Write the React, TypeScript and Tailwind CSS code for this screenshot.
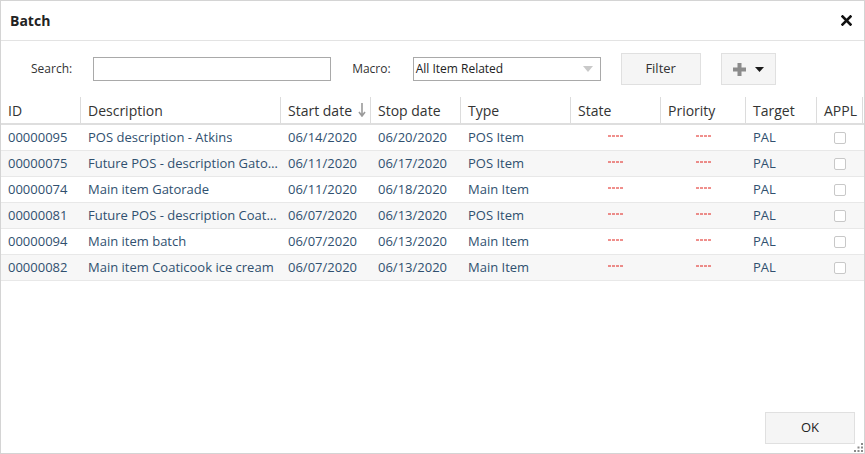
import { } from 'react'

interface Row { id: string; desc: string; start: string; stop: string; type: string; target: string }

const ROWS: Row[] = [
  { id: '00000095', desc: 'POS description - Atkins', start: '06/14/2020', stop: '06/20/2020', type: 'POS Item', target: 'PAL' },
  { id: '00000075', desc: 'Future POS - description Gatorade', start: '06/11/2020', stop: '06/17/2020', type: 'POS Item', target: 'PAL' },
  { id: '00000074', desc: 'Main item Gatorade', start: '06/11/2020', stop: '06/18/2020', type: 'Main Item', target: 'PAL' },
  { id: '00000081', desc: 'Future POS - description Coaticook', start: '06/07/2020', stop: '06/13/2020', type: 'POS Item', target: 'PAL' },
  { id: '00000094', desc: 'Main item batch', start: '06/07/2020', stop: '06/13/2020', type: 'Main Item', target: 'PAL' },
  { id: '00000082', desc: 'Main item Coaticook ice cream', start: '06/07/2020', stop: '06/13/2020', type: 'Main Item', target: 'PAL' },
]

const COLS = [
  { label: 'ID', w: 'w-[80px]' },
  { label: 'Description', w: 'w-[200px]' },
  { label: 'Start date', w: 'w-[90px]', sort: true },
  { label: 'Stop date', w: 'w-[90px]' },
  { label: 'Type', w: 'w-[110px]' },
  { label: 'State', w: 'w-[90px]' },
  { label: 'Priority', w: 'w-[85px]' },
  { label: 'Target', w: 'w-[71px]' },
  { label: 'APPL', w: 'w-[46px]' },
]

// the little red "no value" marker
function Dash() {
  return (
    <svg width="16" height="2" viewBox="0 0 16 2" className="-mt-[4px]">
      <line x1="0" y1="1" x2="16" y2="1" stroke="#e0201a" strokeWidth="1" strokeDasharray="3 1" />
    </svg>
  )
}

export default function App() {
  return (
    <div className="w-[865px] h-[454px] bg-white border border-[#d4d4d4] flex flex-col text-[#333] overflow-hidden" style={{ fontFamily: '"Open Sans", "Noto Sans", sans-serif' }}>
      {/* title */}
      <div className="h-[40px] shrink-0 flex items-center justify-between pl-[9px] pr-[12px] border-b border-[#e3e3e3]">
        <span className="text-[14px] font-bold text-[#222]">Batch</span>
        <svg width="11" height="11" viewBox="0 0 11 11">
          <path d="M1.5 1.5 L9.5 9.5 M9.5 1.5 L1.5 9.5" stroke="#111" strokeWidth="2.6" strokeLinecap="square" />
        </svg>
      </div>

      {/* toolbar */}
      <div className="h-[56px] shrink-0 flex items-center pl-[30px]">
        <span className="text-[12px] mr-[21px]">Search:</span>
        <input className="w-[238px] h-[24px] border border-[#a9a9a9] outline-none px-1 text-[12px]" />
        <span className="text-[12px] ml-[21px] mr-[22px]">Macro:</span>
        <div className="w-[188px] h-[24px] border border-[#a9a9a9] flex items-center justify-between pl-[2px] pr-[7px] text-[12px] text-[#222]">
          <span>All Item Related</span>
          <svg width="10" height="6" viewBox="0 0 10 6"><path d="M0 0 H10 L5 6 Z" fill="#c9c9c9" /></svg>
        </div>
        <button className="ml-[20px] w-[80px] h-[32px] bg-[#f5f5f5] border border-[#e0e0e0] text-[13px] text-[#333]">Filter</button>
        <button className="ml-[20px] w-[55px] h-[32px] bg-[#f5f5f5] border border-[#e0e0e0] flex items-center justify-center gap-[9px]">
          <svg width="13" height="13" viewBox="0 0 13 13"><path d="M6.5 0 V13 M0 6.5 H13" stroke="#8c8c8c" strokeWidth="4" /></svg>
          <svg width="9" height="5" viewBox="0 0 9 5"><path d="M0 0 H9 L4.5 5 Z" fill="#1a1a1a" /></svg>
        </button>
      </div>

      {/* table */}
      <div className="flex flex-col">
        <div className="flex h-[28px] border-b-2 border-[#dedede]">
          {COLS.map(c => (
            <div key={c.label} className={`${c.w} shrink-0 border-r border-[#dcdcdc] flex items-center justify-between pl-[7px] pr-[4px] text-[14px] text-[#333]`}>
              <span>{c.label}</span>
              {c.sort && (
                <svg width="8" height="14" viewBox="0 0 8 14"><path d="M4 0 V12 M1 9 L4 13 L7 9" stroke="#9a9a9a" strokeWidth="1.6" fill="none" /></svg>
              )}
            </div>
          ))}
        </div>
        {ROWS.map((r, i) => (
          <div key={r.id} className={`flex h-[26px] pt-[1px] border-b border-[#e8e8e8] text-[13px] text-[#30506f] ${i % 2 ? 'bg-[#f7f7f7]' : 'bg-white'}`}>
            <div className="w-[80px] shrink-0 pl-[7px] flex items-center">{r.id}</div>
            <div className="w-[200px] shrink-0 pl-[7px] pr-[2px] flex items-center min-w-0 overflow-hidden"><span className="truncate">{r.desc}</span></div>
            <div className="w-[90px] shrink-0 pl-[7px] flex items-center">{r.start}</div>
            <div className="w-[90px] shrink-0 pl-[7px] flex items-center">{r.stop}</div>
            <div className="w-[110px] shrink-0 pl-[7px] flex items-center">{r.type}</div>
            <div className="w-[90px] shrink-0 flex items-center justify-center"><Dash /></div>
            <div className="w-[85px] shrink-0 flex items-center justify-center"><Dash /></div>
            <div className="w-[71px] shrink-0 pl-[7px] flex items-center">{r.target}</div>
            <div className="w-[46px] shrink-0 flex items-center justify-center">
              <span className="block w-[12px] h-[12px] border border-[#c8c8c8] rounded-[2px] bg-white" />
            </div>
          </div>
        ))}
      </div>

      <div className="flex-1" />

      {/* footer */}
      <div className="relative flex justify-end pr-[9px] pb-[9px]">
        <button className="w-[90px] h-[32px] bg-[#f5f5f5] border border-[#e0e0e0] text-[13px] text-[#222]">OK</button>
        <svg className="absolute right-0 bottom-0" width="10" height="10" viewBox="0 0 10 10" fill="#8a8a8a">
          <rect x="7" y="0" width="2" height="2" />
          <rect x="7" y="3.5" width="2" height="2" />
          <rect x="3.5" y="3.5" width="2" height="2" />
          <rect x="7" y="7" width="2" height="2" />
          <rect x="3.5" y="7" width="2" height="2" />
          <rect x="0" y="7" width="2" height="2" />
        </svg>
      </div>
    </div>
  )
}
